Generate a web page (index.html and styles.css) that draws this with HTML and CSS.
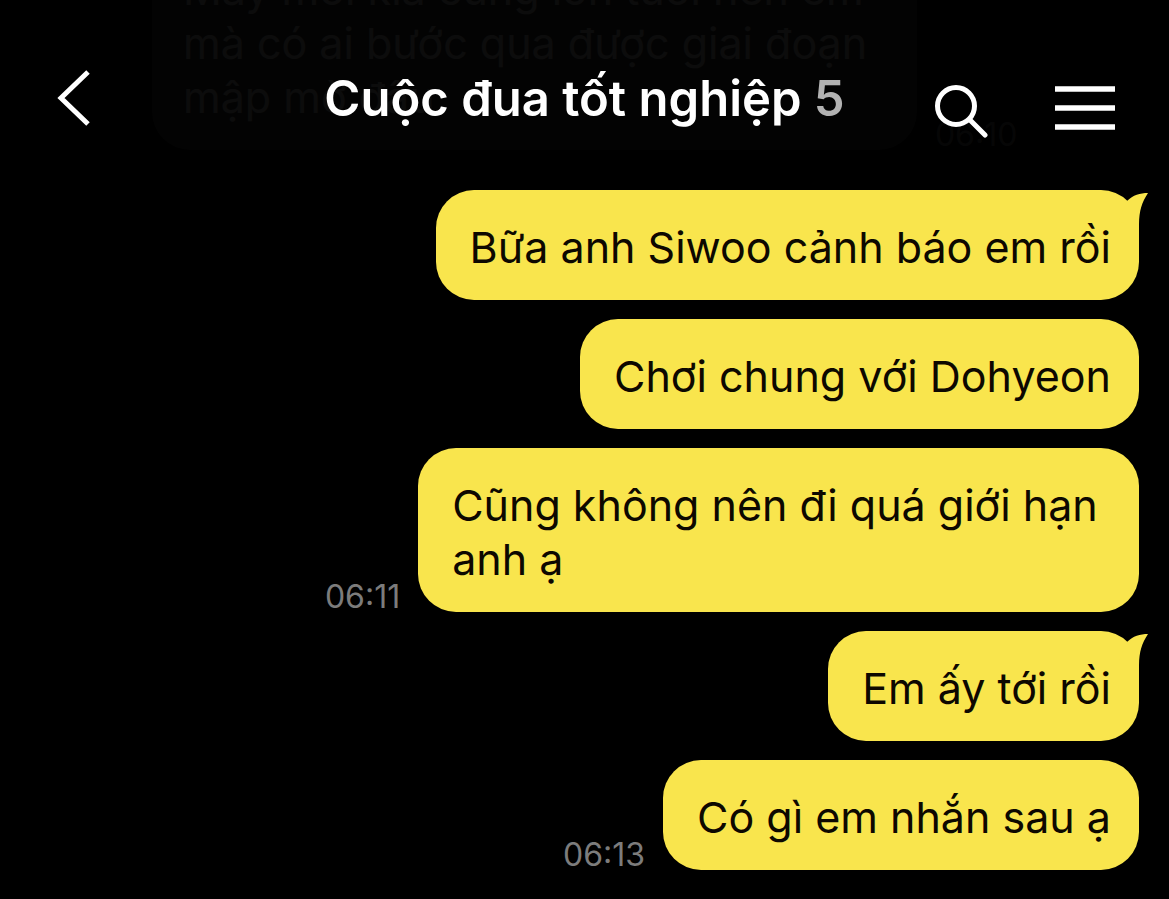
FILE: index.html
```html
<!DOCTYPE html>
<html lang="vi">
<head>
    <meta charset="UTF-8">
    <meta name="viewport" content="width=device-width, initial-scale=1.0">
    <title>Cuộc đua tốt nghiệp</title>
    <link rel="stylesheet" href="styles.css">
</head>
<body>
    <!-- Header, lies over the scrolled messages -->
    <header class="header">
        <button class="icon-button" aria-label="Quay lại">
            <svg width="60" height="60" viewBox="0 0 60 60">
                <path d="M34 3 L7 29 L34 55" fill="none" stroke="#fff" stroke-width="5"/>
            </svg>
        </button>
        <h1>Cuộc đua tốt nghiệp <span class="count">5</span></h1>
        <div class="actions">
            <button class="icon-button" aria-label="Tìm kiếm">
                <svg width="60" height="60" viewBox="0 0 60 60">
                    <circle cx="26" cy="28" r="18.5" fill="none" stroke="#fff" stroke-width="5"/>
                    <path d="M39.500 41.500 L55 57" fill="none" stroke="#fff" stroke-width="5" stroke-linecap="round"/>
                </svg>
            </button>
            <button class="icon-button" aria-label="Menu">
                <svg width="60" height="60" viewBox="0 0 60 60">
                    <path d="M0 11 H60 M0 30 H60 M0 49 H60" fill="none" stroke="#fff" stroke-width="5.500"/>
                </svg>
            </button>
        </div>
    </header>

    <!-- Messages -->
    <main class="chat">
        <div class="row received">
            <p class="bubble">Mấy mối kia cũng lớn tuổi nên em mà có ai bước qua được giai đoạn mập mờ đâu</p>
            <time>06:10</time>
        </div>
        <div class="row sent">
            <p class="bubble">Bữa anh Siwoo cảnh báo em rồi
                <svg class="tail" width="30" height="44" viewBox="0 0 30 44">
                    <path d="M8 11 C14 5 21 3 29 3 C23 12 20 21 20 34 V44 L0 30 Z" fill="#f9e54d"/>
                </svg>
            </p>
        </div>
        <div class="row sent">
            <p class="bubble">Chơi chung với Dohyeon</p>
        </div>
        <div class="row sent">
            <time>06:11</time>
            <p class="bubble">Cũng không nên đi quá giới hạn anh ạ</p>
        </div>
        <div class="row sent">
            <p class="bubble">Em ấy tới rồi
                <svg class="tail" width="30" height="44" viewBox="0 0 30 44">
                    <path d="M8 11 C14 5 21 3 29 3 C23 12 20 21 20 34 V44 L0 30 Z" fill="#f9e54d"/>
                </svg>
            </p>
        </div>
        <div class="row sent">
            <time>06:13</time>
            <p class="bubble">Có gì em nhắn sau ạ</p>
        </div>
    </main>
</body>
</html>
```
FILE: styles.css
```css
* {
    box-sizing: border-box;
}
body {
    margin: 0;
    height: 100vh;
    overflow: hidden;
    font-family: Inter, "Noto Sans", sans-serif;
    background-color: #000000;
}
.header {
    position: absolute;
    top: 0;
    left: 0;
    right: 0;
    z-index: 1;
    display: grid;
    grid-template-columns: 1fr auto 1fr;
    align-items: center;
    padding: 54px 54px 26px;
    background-color: rgba(0, 0, 0, 0.95);
}
h1 {
    margin: 0;
    font-size: 49px;
    line-height: 90px;
    font-weight: 600;
    color: #ffffff;
    white-space: nowrap;
}
.count {
    color: #b2b2b2;
}
.icon-button {
    justify-self: start;
    padding: 0;
    border: none;
    background: none;
    cursor: pointer;
}
.icon-button svg {
    display: block;
}
.actions {
    display: flex;
    justify-content: flex-end;
    gap: 65px;
    padding-top: 18px;
}
.chat {
    display: flex;
    flex-direction: column;
    justify-content: flex-end;
    gap: 19px;
    height: 100%;
    padding: 0 30px 29px;
}
.row {
    display: flex;
    align-items: flex-end;
    gap: 18px;
}
.sent {
    justify-content: flex-end;
}
.received {
    padding-left: 122px;
    margin-bottom: 21px;
}
.bubble {
    position: relative;
    max-width: 65%;
    margin: 0;
    padding: 30px 28px 26px 34px;
    border-radius: 38px;
    font-size: 43px;
    line-height: 54px;
    color: #0d0800;
    background-color: #f9e54d;
}
.received .bubble {
    max-width: 77.5%;
    padding-left: 31px;
    color: #e8e8e8;
    background-color: #404040;
}
.tail {
    position: absolute;
    top: 0;
    right: -10px;
}
time {
    font-size: 32px;
    line-height: 30px;
    color: #7c7c7c;
}
```
